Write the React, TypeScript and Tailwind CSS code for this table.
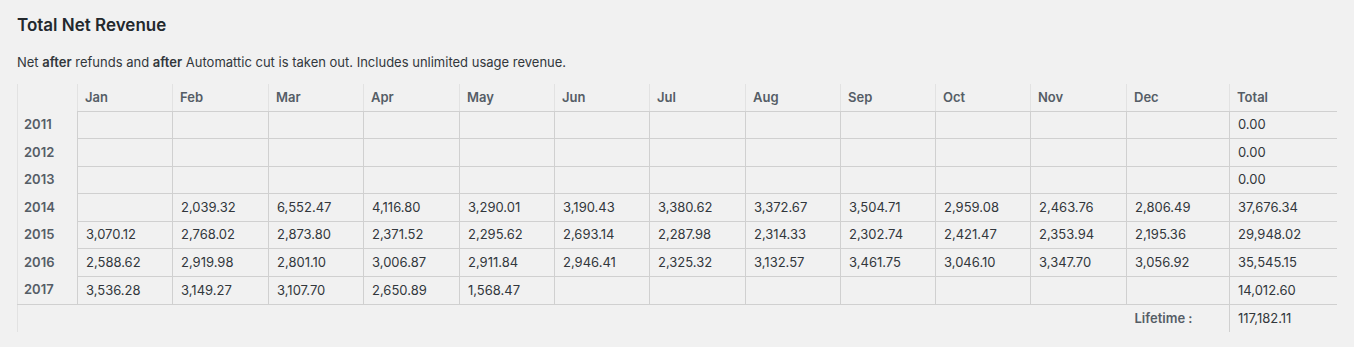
const months = ['Jan', 'Feb', 'Mar', 'Apr', 'May', 'Jun', 'Jul', 'Aug', 'Sep', 'Oct', 'Nov', 'Dec'];

const widths = [60, 95, 96, 95, 96, 95, 95, 96, 95, 95, 95, 96, 103, 107];

const rows: { year: string; values: string[]; total: string }[] = [
  { year: '2011', values: [], total: '0.00' },
  { year: '2012', values: [], total: '0.00' },
  { year: '2013', values: [], total: '0.00' },
  {
    year: '2014',
    values: ['', '2,039.32', '6,552.47', '4,116.80', '3,290.01', '3,190.43', '3,380.62', '3,372.67', '3,504.71', '2,959.08', '2,463.76', '2,806.49'],
    total: '37,676.34',
  },
  {
    year: '2015',
    values: ['3,070.12', '2,768.02', '2,873.80', '2,371.52', '2,295.62', '2,693.14', '2,287.98', '2,314.33', '2,302.74', '2,421.47', '2,353.94', '2,195.36'],
    total: '29,948.02',
  },
  {
    year: '2016',
    values: ['2,588.62', '2,919.98', '2,801.10', '3,006.87', '2,911.84', '2,946.41', '2,325.32', '3,132.57', '3,461.75', '3,046.10', '3,347.70', '3,056.92'],
    total: '35,545.15',
  },
  {
    year: '2017',
    values: ['3,536.28', '3,149.27', '3,107.70', '2,650.89', '1,568.47'],
    total: '14,012.60',
  },
];

export default function App() {
  return (
    <div
      className="min-h-[347px] w-full bg-[#f1f1f1] px-[17px] pt-[14px] text-[#32373c]"
      style={{ fontFamily: 'Inter, "Noto Sans", sans-serif' }}
    >
      <h2 className="text-[17px] font-semibold leading-[22px] text-[#23282d]">Total Net Revenue</h2>
      <p className="mt-[17px] text-[13px] leading-[18px] text-[#32373c]">
        Net <b className="font-semibold">after</b> refunds and <b className="font-semibold">after</b> Automattic cut is
        taken out. Includes unlimited usage revenue.
      </p>

      <table className="mt-[13px] table-fixed border-collapse border-l border-[#e2e2e2] text-left text-[13px]">
        <colgroup>
          {widths.map((w, i) => (
            <col key={i} style={{ width: w }} />
          ))}
        </colgroup>
        <thead>
          <tr className="h-[27px]">
            <th />
            {[...months, 'Total'].map((m) => (
              <th
                key={m}
                className="border-b border-l border-b-[#d0d0d0] border-l-[#e2e2e2] px-[7px] align-middle font-semibold text-[#555d66]"
              >
                {m}
              </th>
            ))}
          </tr>
        </thead>
        <tbody>
          {rows.map((r, ri) => (
            <tr key={r.year} className="h-[27.6px]">
              <th
                className={`px-[6px] font-semibold text-[#555d66] ${ri === rows.length - 1 ? 'border-b border-[#d0d0d0]' : ''}`}
              >
                {r.year}
              </th>
              {months.map((m, i) => (
                <td key={m} className="border-b border-l border-[#d0d0d0] px-[8px] text-[#32373c]">
                  {r.values[i] ?? ''}
                </td>
              ))}
              <td className="border-b border-l border-[#d0d0d0] px-[8px] text-[#32373c]">{r.total}</td>
            </tr>
          ))}
          <tr className="h-[28px]">
            <td colSpan={12} />
            <th className="px-[8px] font-semibold text-[#555d66]">Lifetime :</th>
            <td className="border-l border-[#d0d0d0] px-[8px] text-[#32373c]">117,182.11</td>
          </tr>
        </tbody>
      </table>
    </div>
  );
}
